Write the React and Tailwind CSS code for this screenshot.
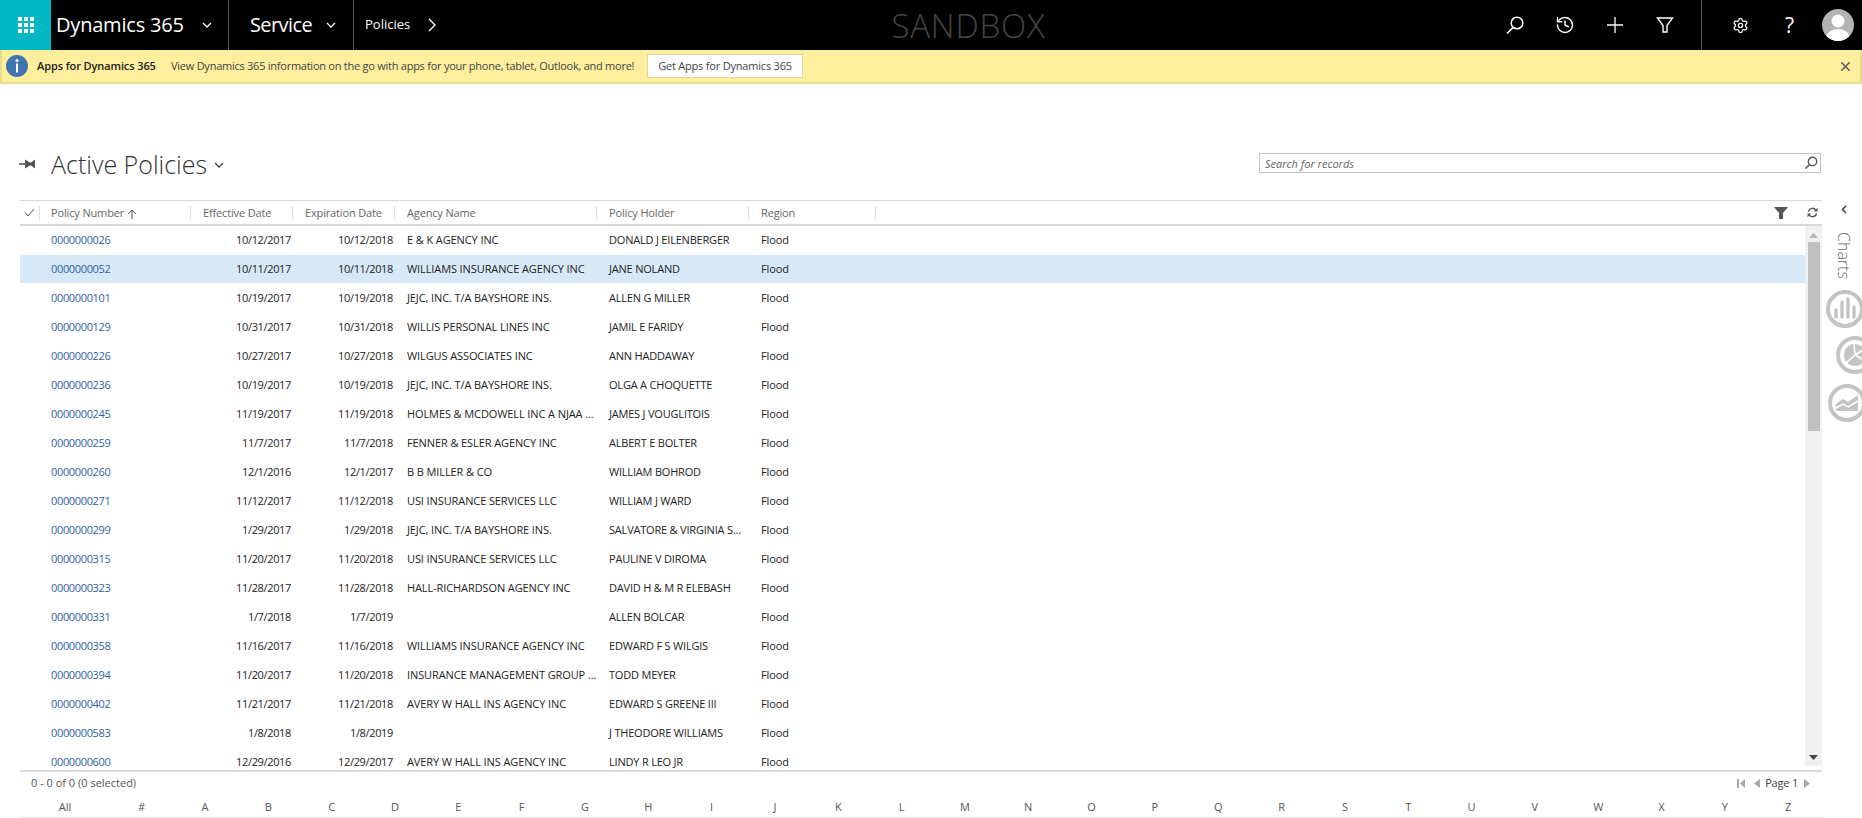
import { History, Settings, X } from 'lucide-react';

const policies = [
  ['0000000026', '10/12/2017', '10/12/2018', 'E & K AGENCY INC', 'DONALD J EILENBERGER'],
  ['0000000052', '10/11/2017', '10/11/2018', 'WILLIAMS INSURANCE AGENCY INC', 'JANE NOLAND'],
  ['0000000101', '10/19/2017', '10/19/2018', 'JEJC, INC. T/A BAYSHORE INS.', 'ALLEN G MILLER'],
  ['0000000129', '10/31/2017', '10/31/2018', 'WILLIS PERSONAL LINES INC', 'JAMIL E FARIDY'],
  ['0000000226', '10/27/2017', '10/27/2018', 'WILGUS ASSOCIATES INC', 'ANN HADDAWAY'],
  ['0000000236', '10/19/2017', '10/19/2018', 'JEJC, INC. T/A BAYSHORE INS.', 'OLGA A CHOQUETTE'],
  ['0000000245', '11/19/2017', '11/19/2018', 'HOLMES & MCDOWELL INC A NJAA ...', 'JAMES J VOUGLITOIS'],
  ['0000000259', '11/7/2017', '11/7/2018', 'FENNER & ESLER AGENCY INC', 'ALBERT E BOLTER'],
  ['0000000260', '12/1/2016', '12/1/2017', 'B B MILLER & CO', 'WILLIAM BOHROD'],
  ['0000000271', '11/12/2017', '11/12/2018', 'USI INSURANCE SERVICES LLC', 'WILLIAM J WARD'],
  ['0000000299', '1/29/2017', '1/29/2018', 'JEJC, INC. T/A BAYSHORE INS.', 'SALVATORE & VIRGINIA S...'],
  ['0000000315', '11/20/2017', '11/20/2018', 'USI INSURANCE SERVICES LLC', 'PAULINE V DIROMA'],
  ['0000000323', '11/28/2017', '11/28/2018', 'HALL-RICHARDSON AGENCY INC', 'DAVID H & M R ELEBASH'],
  ['0000000331', '1/7/2018', '1/7/2019', '', 'ALLEN BOLCAR'],
  ['0000000358', '11/16/2017', '11/16/2018', 'WILLIAMS INSURANCE AGENCY INC', 'EDWARD F S WILGIS'],
  ['0000000394', '11/20/2017', '11/20/2018', 'INSURANCE MANAGEMENT GROUP ...', 'TODD MEYER'],
  ['0000000402', '11/21/2017', '11/21/2018', 'AVERY W HALL INS AGENCY INC', 'EDWARD S GREENE III'],
  ['0000000583', '1/8/2018', '1/8/2019', '', 'J THEODORE WILLIAMS'],
  ['0000000600', '12/29/2016', '12/29/2017', 'AVERY W HALL INS AGENCY INC', 'LINDY R LEO JR'],
];

const letters = ['#', ...'ABCDEFGHIJKLMNOPQRSTUVWXYZ'];
const columns = 'grid grid-cols-[20px_151px_102px_102px_202px_152px_127px_1fr]';

function Chevron({ className = '' }) {
  return (
    <svg width="10" height="6" viewBox="0 0 10 6" className={className}>
      <path d="M1 1l4 4 4-4" fill="none" stroke="currentColor" strokeWidth="1.3" />
    </svg>
  );
}

function TopBar() {
  return (
    <header className="flex h-[50px] items-stretch bg-black text-white">
      <div className="flex w-[51px] items-center justify-center bg-[#00b7c3]">
        <div className="grid grid-cols-3 gap-[2px]">
          {Array.from({ length: 9 }).map((_, i) => (
            <span key={i} className="h-[4px] w-[4px] bg-white" />
          ))}
        </div>
      </div>
      <div className="flex w-[178px] items-center border-r border-[#555] pl-[5px]">
        <span className="w-[146px] text-[20px] leading-none tracking-[-0.2px]">Dynamics 365</span>
        <Chevron />
      </div>
      <div className="flex w-[125px] items-center border-r border-[#555] pl-[21px]">
        <span className="w-[76px] text-[20px] leading-none tracking-[-0.6px]">Service</span>
        <Chevron />
      </div>
      <div className="flex items-center pl-[11px]">
        <span className="w-[63px] text-[13px]">Policies</span>
        <svg width="8" height="14" viewBox="0 0 8 14">
          <path d="M1 1l6 6-6 6" fill="none" stroke="white" strokeWidth="1.4" />
        </svg>
      </div>
      <div className="flex flex-1 items-center justify-center">
        <span className="ml-[12px] text-[33px] font-light leading-none tracking-[0.8px] text-[#444]">SANDBOX</span>
      </div>
      <div className="flex w-[212px] items-center justify-end gap-[30px] pr-[26px]">
        <svg width="20" height="20" viewBox="0 0 20 20">
          <circle cx="12" cy="8" r="5.8" fill="none" stroke="white" strokeWidth="1.5" />
          <path d="M8 12.5L2 18.5" stroke="white" strokeWidth="1.7" />
        </svg>
        <History size={20} strokeWidth={1.7} />
        <svg width="20" height="20" viewBox="0 0 20 20">
          <path d="M10 2v16M2 10h16" stroke="white" strokeWidth="1.3" />
        </svg>
        <svg width="20" height="20" viewBox="0 0 20 20">
          <path d="M2.5 3h15L12 10.5V17H8v-6.5z" fill="none" stroke="white" strokeWidth="1.4" />
        </svg>
      </div>
      <div className="flex w-[161px] items-center border-l border-[#555] pl-[30px]">
        <Settings size={17} strokeWidth={1.8} />
        <span className="ml-[36px] w-[12px] text-[21px] leading-none">?</span>
        <svg width="32" height="32" viewBox="0 0 32 32" className="ml-[25px]">
          <clipPath id="avatar-clip"><circle cx="16" cy="16" r="16" /></clipPath>
          <g clipPath="url(#avatar-clip)">
            <rect width="32" height="32" fill="#b4b4b4" />
            <circle cx="16" cy="12" r="6.5" fill="white" />
            <ellipse cx="16" cy="29" rx="12" ry="9" fill="white" />
          </g>
        </svg>
      </div>
    </header>
  );
}

function Banner() {
  return (
    <div className="flex h-[34px] items-center border-b-2 border-l-2 border-r-2 border-[#e6dd8e] bg-[#fdef9d] text-[11px] text-[#444]">
      <svg width="22" height="22" viewBox="0 0 22 22" className="ml-[4px] shrink-0">
        <circle cx="11" cy="11" r="11" fill="#3f74b0" />
        <circle cx="11" cy="5.6" r="1.5" fill="white" />
        <rect x="10" y="8.5" width="2" height="9" fill="white" />
      </svg>
      <span className="ml-[9px] w-[134px] font-semibold tracking-[-0.1px] text-[#222]">Apps for Dynamics 365</span>
      <span className="w-[476px] whitespace-nowrap tracking-[-0.25px]">View Dynamics 365 information on the go with apps for your phone, tablet, Outlook, and more!</span>
      <button className="flex h-[24px] w-[156px] items-center justify-center border border-[#dfd79a] bg-white text-[11px] tracking-[-0.2px] text-[#444]">
        Get Apps for Dynamics 365
      </button>
      <X size={15} strokeWidth={2.2} className="ml-auto mr-[7px] text-[#555]" />
    </div>
  );
}

function TitleRow() {
  return (
    <div className="flex h-[116px] items-end pb-[17px] pl-[19px]">
      <svg width="17" height="10" viewBox="0 0 17 10" className="mb-[14px]">
        <path d="M0 5h7" stroke="#555" strokeWidth="1.6" />
        <path d="M6 0.5l5 3h1l4-3v9l-4-3h-1l-5 3z" fill="#555" />
      </svg>
      <h1 className="mb-[1px] ml-[15px] text-[25px] font-light leading-[36px] text-[#333]">Active Policies</h1>
      <Chevron className="mb-[15px] ml-[7px] text-[#444]" />
      <div className="mb-[10px] ml-auto mr-[41px] flex h-[20px] w-[562px] items-center border border-[#c4c4c4] pl-[5px]">
        <span className="flex-1 pt-[2px] text-[11px] italic text-[#666]">Search for records</span>
        <svg width="14" height="14" viewBox="0 0 14 14" className="mr-[2px]">
          <circle cx="8.5" cy="5.5" r="4.2" fill="none" stroke="#555" strokeWidth="1.4" />
          <path d="M5.5 8.5L1.5 12.5" stroke="#555" strokeWidth="1.6" />
        </svg>
      </div>
    </div>
  );
}

function GridHeader() {
  const heads = ['Policy Number', 'Effective Date', 'Expiration Date', 'Agency Name', 'Policy Holder', 'Region'];
  return (
    <div className="flex h-[26px] border-y border-y-[#d8d8d8] border-b-2">
      <div className={`${columns} w-[1785px] items-center`}>
        <div className="flex h-[14px] items-center justify-center border-r border-[#ddd]">
          <svg width="11" height="9" viewBox="0 0 11 9">
            <path d="M1 4.5L4 8l6-7" fill="none" stroke="#555" strokeWidth="1" />
          </svg>
        </div>
        {heads.map((head, i) => (
          <div key={head} className={`flex h-[14px] items-center whitespace-nowrap border-r border-[#ddd] pt-[2px] text-[11px] tracking-[-0.15px] text-[#666] ${i === 0 ? 'pl-[11px]' : 'pl-[12px]'}`}>
            {head}
            {i === 0 && (
              <svg width="10" height="10" viewBox="0 0 10 10" className="ml-[3px]">
                <path d="M5 10V1M1 5l4-4 4 4" fill="none" stroke="#555" strokeWidth="1" />
              </svg>
            )}
          </div>
        ))}
      </div>
      <div className="flex flex-1 items-center">
        <svg width="14" height="12" viewBox="0 0 14 12" className="-ml-[31px]">
          <path d="M0 0h14L9 6v6H5V6z" fill="#555" />
        </svg>
        <svg width="11" height="11" viewBox="0 0 11 11" className="ml-[19px]">
          <path d="M1.5 4.5A4 4 0 0 1 9 3.5M9.5 6.5A4 4 0 0 1 2 7.5" fill="none" stroke="#555" strokeWidth="1.4" />
          <path d="M10.5 0.8v3.7H6.8zM0.5 10.2V6.5h3.7z" fill="#555" />
        </svg>
      </div>
    </div>
  );
}

function PolicyRow({ row, selected }) {
  return (
    <div className={`${columns} mb-[1px] h-[28px] items-center text-[11px] text-[#222] ${selected ? 'bg-[#d7e9f7]' : ''}`}>
      <span />
      <a className="pl-[11px] tracking-[-0.35px] text-[#2f5fa8]">{row[0]}</a>
      <span className="pr-[2px] text-right tracking-[-0.35px]">{row[1]}</span>
      <span className="pr-[2px] text-right tracking-[-0.35px]">{row[2]}</span>
      <span className="whitespace-nowrap pl-[12px] tracking-[-0.1px]">{row[3]}</span>
      <span className="whitespace-nowrap pl-[12px] tracking-[-0.2px]">{row[4]}</span>
      <span className="pl-[12px] tracking-[-0.1px]">Flood</span>
      <span />
    </div>
  );
}

function Scrollbar() {
  return (
    <div className="flex h-[540px] w-[17px] flex-col items-center bg-[#f0f0f0]">
      <svg width="9" height="5" viewBox="0 0 9 5" className="mt-[7px]"><path d="M0 5l4.5-5L9 5z" fill="#b5b5b5" /></svg>
      <div className="mt-[4px] h-[189px] w-[12px] bg-[#c0c0c0]" />
      <svg width="9" height="5" viewBox="0 0 9 5" className="mt-[324px]"><path d="M0 0l4.5 5L9 0z" fill="#444" /></svg>
    </div>
  );
}

function GridFooter() {
  return (
    <div className="border-t-2 border-[#dcdcdc] text-[11px] text-[#555]">
      <div className="flex h-[23px] items-center pl-[11px] pr-[12px]">
        <span className="flex-1">0 - 0 of 0 (0 selected)</span>
        <svg width="8" height="9" viewBox="0 0 8 9"><path d="M0 0h2v9H0zM8 0v9L3 4.5z" fill="#a8a8a8" /></svg>
        <svg width="6" height="9" viewBox="0 0 6 9" className="ml-[9px]"><path d="M6 0v9L0 4.5z" fill="#a8a8a8" /></svg>
        <span className="ml-[5px] tracking-[-0.2px] text-[#444]">Page 1</span>
        <svg width="6" height="9" viewBox="0 0 6 9" className="ml-[6px]"><path d="M0 0v9l6-4.5z" fill="#a8a8a8" /></svg>
      </div>
      <div className="flex h-[24px] items-center pr-[2px]">
        <span className="w-[90px] text-center">All</span>
        {letters.map((letter) => (
          <span key={letter} className="flex-1 text-center">{letter}</span>
        ))}
      </div>
    </div>
  );
}

function ChartsPanel() {
  return (
    <aside className="flex w-[40px] flex-col overflow-hidden">
      <svg width="6" height="9" viewBox="0 0 6 9" className="ml-[19px] mt-[5px]">
        <path d="M5 1L1.5 4.5 5 8" fill="none" stroke="#444" strokeWidth="1.6" />
      </svg>
      <span className="ml-[13px] mt-[18px] h-[48px] self-start text-[16px] font-light leading-[18px] text-[#666] [writing-mode:vertical-rl]">Charts</span>
      <svg width="38" height="38" viewBox="0 0 38 38" className="ml-[4px] mt-[10px] shrink-0">
        <circle cx="19" cy="19" r="17" fill="none" stroke="#c4c4c4" strokeWidth="4" />
        <path d="M10 27v-7M16 27V12M22 27V9M28 27V17" stroke="#c4c4c4" strokeWidth="3.4" strokeLinecap="round" />
      </svg>
      <svg width="38" height="38" viewBox="0 0 38 38" className="ml-[14px] mt-[8px] shrink-0">
        <circle cx="19" cy="19" r="17" fill="none" stroke="#c4c4c4" strokeWidth="4" />
        <circle cx="19" cy="19" r="11" fill="#c4c4c4" />
        <path d="M19 19l-1-11M19 19l-9 8M19 19l11 6M19 19L30 12" stroke="white" strokeWidth="1.6" />
      </svg>
      <svg width="38" height="38" viewBox="0 0 38 38" className="ml-[6px] mt-[10px] shrink-0">
        <circle cx="19" cy="19" r="17" fill="none" stroke="#c4c4c4" strokeWidth="4" />
        <path d="M8 20l7-5 5 3 10-7v16H8z" fill="#c4c4c4" />
        <path d="M8 24l7-4 5 3 10-6" fill="none" stroke="white" strokeWidth="1.5" />
      </svg>
    </aside>
  );
}

export default function App() {
  return (
    <div className="h-[818px] w-[1862px] overflow-hidden bg-white font-['Open_Sans',sans-serif]">
      <TopBar />
      <Banner />
      <TitleRow />
      <div className="flex">
        <section className="ml-[20px] h-[618px] w-[1802px] border-b border-[#e8e8e8]">
          <GridHeader />
          <div className="flex h-[544px] overflow-hidden">
            <div className="w-[1785px]">
              {policies.map((row, i) => (
                <PolicyRow key={row[0]} row={row} selected={i === 1} />
              ))}
            </div>
            <Scrollbar />
          </div>
          <GridFooter />
        </section>
        <ChartsPanel />
      </div>
    </div>
  );
}
